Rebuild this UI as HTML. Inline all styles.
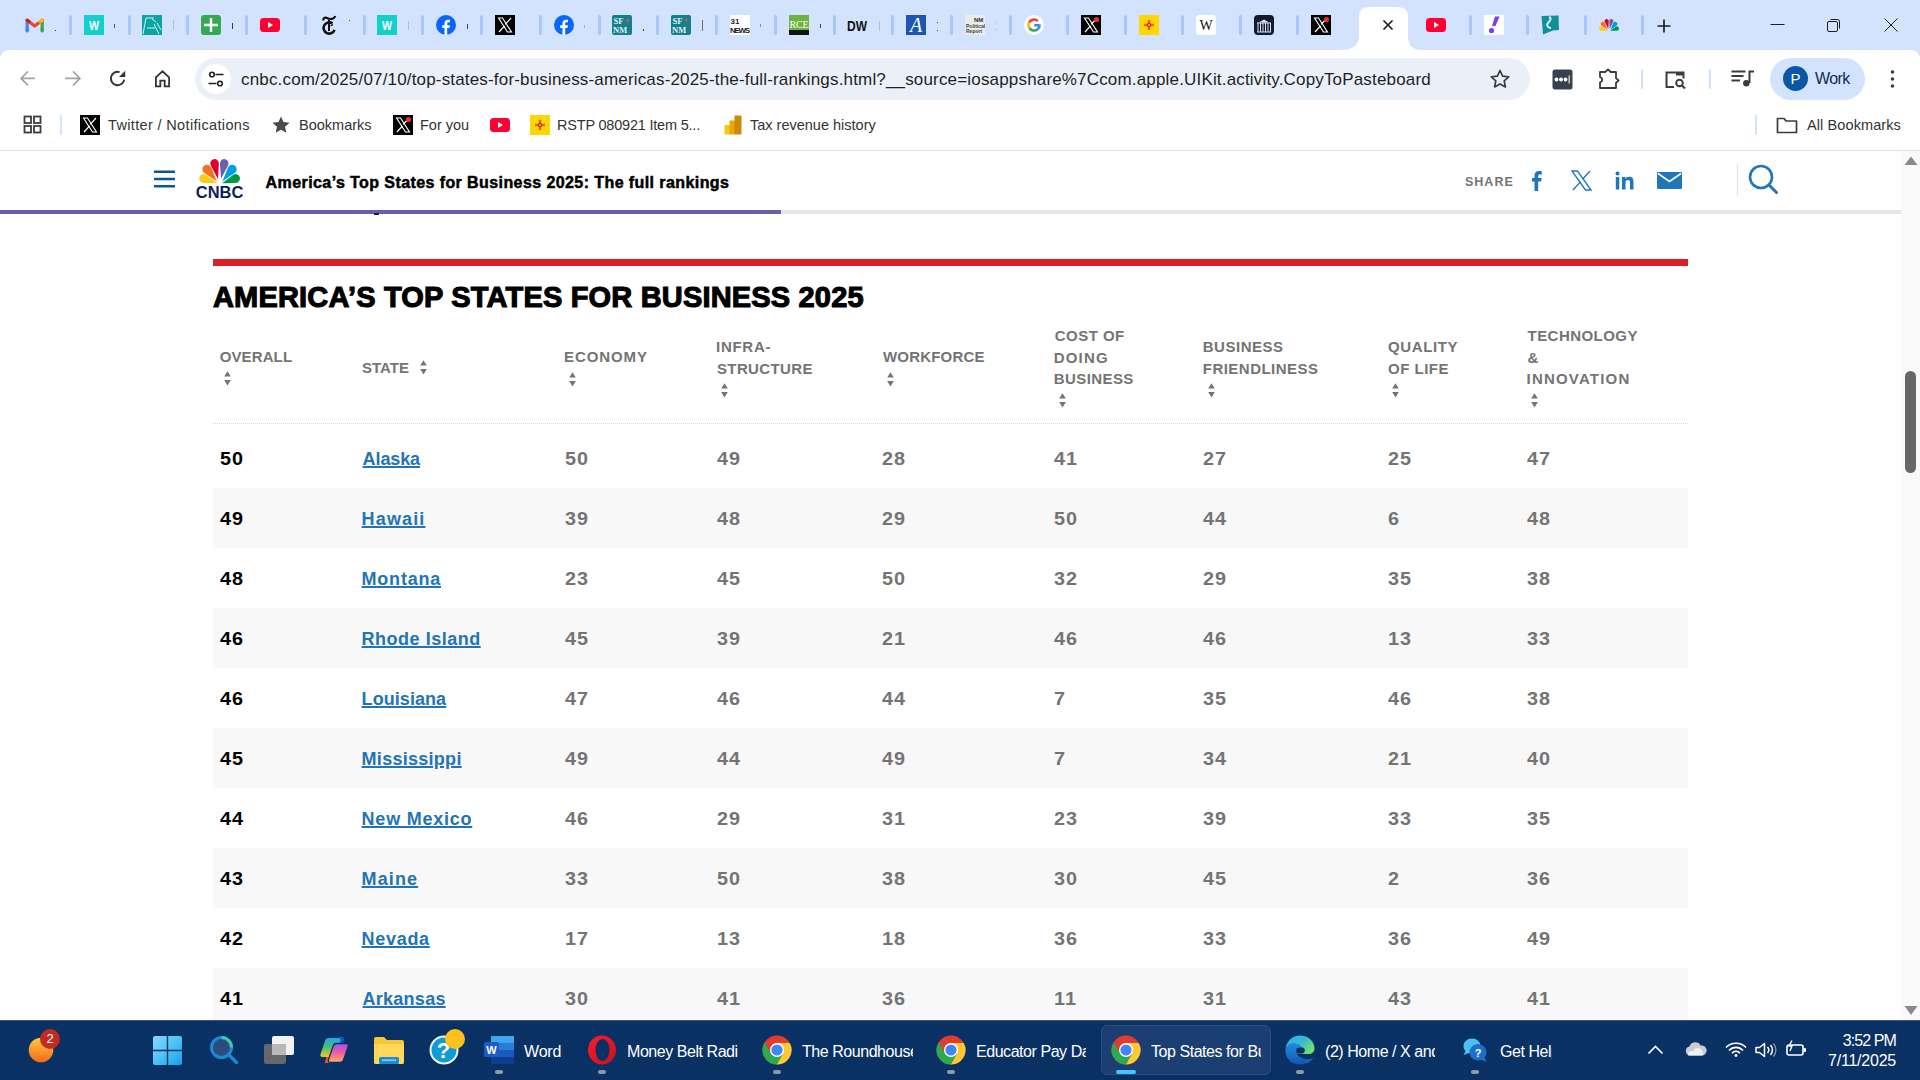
<!DOCTYPE html>
<html><head><meta charset="utf-8">
<style>
*{box-sizing:border-box;margin:0;padding:0}
html,body{width:1920px;height:1080px;overflow:hidden;background:#fff;font-family:"Liberation Sans",sans-serif}
.a{position:absolute}
#tabs{left:0;top:0;width:1920px;height:60px;background:#d3e3fd}
.sep{position:absolute;top:15px;width:3px;height:20px;background:#a8c7fa;border-radius:1.5px}
.fav{position:absolute;top:15px;width:20px;height:20px}
#toolbar{left:0;top:50px;width:1920px;height:50px;background:#fff;border-radius:9px 9px 0 0}
#omni{left:195px;top:58px;width:1335px;height:42px;background:#ebf0f8;border-radius:21px}
#bm{left:0;top:100px;width:1920px;height:51px;background:#fff;border-bottom:1px solid #e1e3e1}
.bmt{position:absolute;top:115px;font-size:14.5px;color:#333;line-height:20px;white-space:nowrap}
#page{left:0;top:151px;width:1901px;height:869px;background:#fff;overflow:hidden}
#scroll{left:1901px;top:151px;width:19px;height:869px;background:#f9f9f9}
#task{left:0;top:1020px;width:1920px;height:60px;background:#0a3164}
.hd{font-size:15px;line-height:22px;font-weight:bold;color:#747474;letter-spacing:1px;white-space:nowrap}
.rk,.st,.nm{font-size:18px;line-height:26px;font-weight:bold;white-space:nowrap}
.rk{color:#000;letter-spacing:1px;transform:scaleX(1.1);transform-origin:0 0}
.st{color:#2274b6;text-decoration:underline;text-underline-offset:1px;text-decoration-thickness:2px}
.nm{color:#747474;letter-spacing:1px;transform:scaleX(1.1);transform-origin:0 0}
.tt{top:20.5px;font-size:16px;line-height:22px;color:#fff;white-space:nowrap;letter-spacing:-0.45px}
.ind{top:50px;width:8px;height:4px;border-radius:2px;background:#8c99ad}
</style></head>
<body>
<div id="tabs" class="a">
<div class="fav" style="left:25px"><svg width="20" height="20" viewBox="0 0 20 20"><path d="M2.2 16V5.5" stroke="#4285f4" stroke-width="3.2" stroke-linecap="round"/><path d="M17.2 16V5.5" stroke="#34a853" stroke-width="3.2" stroke-linecap="round"/><path d="M2.2 5.2L9.7 11l7.5-5.8" fill="none" stroke="#ea4335" stroke-width="3.2" stroke-linejoin="round" stroke-linecap="round"/><path d="M15.2 6.7l2-1.5" stroke="#fbbc04" stroke-width="3.2" stroke-linecap="round"/><path d="M2.2 5.2l1.8 1.4" stroke="#c5221f" stroke-width="3.2" stroke-linecap="round"/><rect x="0.6" y="13" width="3.2" height="3" fill="#4285f4"/><rect x="15.6" y="13" width="3.2" height="3" fill="#34a853"/></svg></div>
<div class="fav" style="left:84px"><svg width="20" height="20" viewBox="0 0 20 20"><rect width="20" height="20" fill="#12d0cc"/><text x="10" y="15" font-family="Liberation Sans" font-weight="bold" font-size="13" fill="#fff" text-anchor="middle" textLength="10" lengthAdjust="spacingAndGlyphs">W</text></svg></div>
<div class="fav" style="left:142px"><svg width="20" height="20" viewBox="0 0 20 20"><rect width="20" height="20" fill="#0aa3a6"/><path d="M1 19l3-16h8M5 13h8M10 4l4 3M12 9l5 10M15 8l4 7" stroke="#d8f4f4" stroke-width="1" fill="none"/></svg></div>
<div class="fav" style="left:201px"><svg width="20" height="20" viewBox="0 0 20 20"><rect width="20" height="20" rx="3" fill="#34a853"/><path d="M10 3v14M3 10h14" stroke="#fff" stroke-width="2.4"/></svg></div>
<div class="fav" style="left:260px"><svg width="20" height="20" viewBox="0 0 20 20"><rect x="0" y="3" width="20" height="14" rx="3.5" fill="#ff0033"/><path d="M8 7v6l5-3z" fill="#fff"/></svg></div>
<div class="fav" style="left:319px"><svg width="20" height="20" viewBox="0 0 20 20"><path d="M4.2 5.5C4 3 6 2 8 3s4 1.5 6 0.5c1-.5 2-1.5 2.3-2.5" fill="none" stroke="#111" stroke-width="2.2"/><path d="M13.5 8.5A5.6 5.6 0 1 0 15.5 14.8" fill="none" stroke="#111" stroke-width="2.6"/><path d="M10 4.5V16" stroke="#111" stroke-width="2"/><path d="M11.5 11l2.5-1.5" stroke="#111" stroke-width="1.2"/></svg></div>
<div class="fav" style="left:377px"><svg width="20" height="20" viewBox="0 0 20 20"><rect width="20" height="20" fill="#12d0cc"/><text x="10" y="15" font-family="Liberation Sans" font-weight="bold" font-size="13" fill="#fff" text-anchor="middle" textLength="10" lengthAdjust="spacingAndGlyphs">W</text></svg></div>
<div class="fav" style="left:436px"><svg width="20" height="20" viewBox="0 0 20 20"><circle cx="10" cy="10" r="10" fill="#0866ff"/><path d="M11.2 20v-7h2.3l.4-2.7h-2.7V8.6c0-.8.3-1.4 1.4-1.4h1.4V4.8c-.3 0-1.1-.1-2-.1-2.1 0-3.5 1.3-3.5 3.6v2h-2.3V13h2.3v7z" fill="#fff"/></svg></div>
<div class="fav" style="left:495px"><svg width="20" height="20" viewBox="0 0 20 20"><rect width="20" height="20" fill="#000"/><path d="M3.5 3h4l9 14h-4z" fill="none" stroke="#fff" stroke-width="1.1"/><path d="M16 3l-5.8 6.4M4 17l5.6-6.2" stroke="#fff" stroke-width="1.2"/></svg></div>
<div class="fav" style="left:554px"><svg width="20" height="20" viewBox="0 0 20 20"><circle cx="10" cy="10" r="10" fill="#0866ff"/><path d="M11.2 20v-7h2.3l.4-2.7h-2.7V8.6c0-.8.3-1.4 1.4-1.4h1.4V4.8c-.3 0-1.1-.1-2-.1-2.1 0-3.5 1.3-3.5 3.6v2h-2.3V13h2.3v7z" fill="#fff"/></svg></div>
<div class="fav" style="left:612px"><svg width="20" height="20" viewBox="0 0 20 20"><rect width="20" height="20" rx="2" fill="#12808f"/><text x="1.5" y="8.5" font-family="Liberation Serif" font-weight="bold" font-size="8.5" fill="#e6f2f2">SF</text><text x="1" y="17.5" font-family="Liberation Serif" font-weight="bold" font-size="8.5" fill="#e6f2f2">NM</text><path d="M15.5 3v4.5M13 5.3h5" stroke="#d9534f" stroke-width="1"/></svg></div>
<div class="fav" style="left:671px"><svg width="20" height="20" viewBox="0 0 20 20"><rect width="20" height="20" rx="2" fill="#12808f"/><text x="1.5" y="8.5" font-family="Liberation Serif" font-weight="bold" font-size="8.5" fill="#e6f2f2">SF</text><text x="1" y="17.5" font-family="Liberation Serif" font-weight="bold" font-size="8.5" fill="#e6f2f2">NM</text><path d="M15.5 3v4.5M13 5.3h5" stroke="#d9534f" stroke-width="1"/></svg></div>
<div class="fav" style="left:730px"><svg width="20" height="20" viewBox="0 0 20 20"><rect width="20" height="20" fill="#fff"/><text x="0.5" y="9" font-family="Liberation Sans" font-weight="bold" font-size="8" fill="#222">31</text><text x="0" y="18" font-family="Liberation Sans" font-weight="bold" font-size="8" fill="#222" textLength="20">NEWS</text></svg></div>
<div class="fav" style="left:789px"><svg width="20" height="20" viewBox="0 0 20 20"><rect width="20" height="15" fill="#6cb33f"/><rect y="15" width="20" height="5" fill="#111"/><text x="10" y="13" font-family="Liberation Serif" font-size="10" fill="#fff" text-anchor="middle" textLength="19">RCE</text></svg></div>
<div class="fav" style="left:847px"><svg width="20" height="20" viewBox="0 0 20 20"><text x="10" y="16" font-family="Liberation Sans" font-weight="bold" font-size="14" fill="#111" text-anchor="middle" textLength="20" lengthAdjust="spacingAndGlyphs">DW</text></svg></div>
<div class="fav" style="left:906px"><svg width="20" height="20" viewBox="0 0 20 20"><rect width="20" height="20" fill="#1c56b0"/><text x="10" y="17" font-family="Liberation Serif" font-style="italic" font-size="20" fill="#fff" text-anchor="middle">A</text></svg></div>
<div class="fav" style="left:965px"><svg width="20" height="20" viewBox="0 0 20 20"><rect width="20" height="20" fill="#ececec"/><text x="9" y="7" font-family="Liberation Sans" font-weight="bold" font-size="6" fill="#333">NM</text><text x="1" y="13" font-family="Liberation Sans" font-weight="bold" font-size="5" fill="#444">Political</text><text x="1" y="18" font-family="Liberation Sans" font-weight="bold" font-size="5" fill="#444">Report</text></svg></div>
<div class="fav" style="left:1024px"><svg width="20" height="20" viewBox="0 0 20 20"><circle cx="10" cy="10" r="10" fill="#fff"/><path d="M15.5 10.2H10.2" stroke="#4285f4" stroke-width="2.6"/><path d="M15.6 9.5a5.6 5.6 0 0 1-1.9 4.7" stroke="#4285f4" stroke-width="2.6" fill="none"/><path d="M13.7 14.2A5.6 5.6 0 0 1 5.3 12.8" stroke="#34a853" stroke-width="2.6" fill="none"/><path d="M5.3 12.8a5.6 5.6 0 0 1 0-5.6" stroke="#fbbc05" stroke-width="2.6" fill="none"/><path d="M5.3 7.2A5.6 5.6 0 0 1 13.8 6" stroke="#ea4335" stroke-width="2.6" fill="none"/></svg></div>
<div class="fav" style="left:1081px"><svg width="20" height="20" viewBox="0 0 20 20"><rect width="20" height="20" fill="#000"/><path d="M3.5 3h4l9 14h-4z" fill="none" stroke="#fff" stroke-width="1.1"/><path d="M16 3l-5.8 6.4M4 17l5.6-6.2" stroke="#fff" stroke-width="1.2"/><circle cx="15.5" cy="4.5" r="2.6" fill="#ef2b2b"/></svg></div>
<div class="fav" style="left:1139px"><svg width="20" height="20" viewBox="0 0 20 20"><rect width="20" height="20" fill="#ffd700"/><circle cx="10" cy="10" r="2" fill="#c8102e"/><path d="M9.3 5v10M10.7 5v10M5 9.3h10M5 10.7h10" stroke="#c8102e" stroke-width="0.7"/><circle cx="10" cy="10" r="1" fill="#ffd700"/></svg></div>
<div class="fav" style="left:1196px"><svg width="20" height="20" viewBox="0 0 20 20"><rect width="20" height="20" rx="3" fill="#fff"/><text x="10" y="15" font-family="Liberation Serif" font-size="14" fill="#111" text-anchor="middle">W</text></svg></div>
<div class="fav" style="left:1254px"><svg width="20" height="20" viewBox="0 0 20 20"><rect width="20" height="20" rx="4" fill="#121a33"/><path d="M3 8h14M4 8v9M6.5 8v9M9 8v9M11.5 8v9M14 8v9M16.5 8v9M3 17h14" stroke="#dfe3ee" stroke-width="1"/><path d="M5 7.5l5-3 5 3z" fill="#dfe3ee"/></svg></div>
<div class="fav" style="left:1311px"><svg width="20" height="20" viewBox="0 0 20 20"><rect width="20" height="20" fill="#000"/><path d="M3.5 3h4l9 14h-4z" fill="none" stroke="#fff" stroke-width="1.1"/><path d="M16 3l-5.8 6.4M4 17l5.6-6.2" stroke="#fff" stroke-width="1.2"/><circle cx="15.5" cy="4.5" r="2.6" fill="#ef2b2b"/></svg></div>
<div class="fav" style="left:1426px"><svg width="20" height="20" viewBox="0 0 20 20"><rect x="0" y="3" width="20" height="14" rx="3.5" fill="#ff0033"/><path d="M8 7v6l5-3z" fill="#fff"/></svg></div>
<div class="fav" style="left:1484px"><svg width="20" height="20" viewBox="0 0 20 20"><rect width="20" height="20" fill="#fff"/><path d="M11 1.5h4.5l-4 9.5h-3.5z" fill="#7d3bf2"/><circle cx="7.5" cy="15.5" r="2.6" fill="#7d3bf2"/></svg></div>
<div class="fav" style="left:1541px"><svg width="20" height="20" viewBox="0 0 20 20"><path d="M0.5 1l17-0.5 0.5 14.5-6 0.5-10 4z" fill="#0e9197"/><path d="M8 2c3 1 1 4 -1 6s0 5 3 5" stroke="#d8efef" stroke-width="2" fill="none"/></svg></div>
<div class="fav" style="left:1599px"><svg width="20" height="20" viewBox="0 0 20 20"><g transform="translate(0,4) scale(0.488)"><path d="M18.50 24.20L4.51 23.90A4.4 4.4 0 1 1 7.19 15.95Z" fill="#fccc12"/><path d="M17.80 22.20L5.41 13.95A4.5 4.5 0 1 1 12.05 8.46Z" fill="#f37021"/><path d="M19.00 20.20L11.79 6.39A4.3 4.3 0 1 1 19.89 4.65Z" fill="#e4002b"/><path d="M22.00 19.80L20.91 4.71A4.3 4.3 0 1 1 29.01 6.39Z" fill="#6e5fab"/><path d="M23.50 22.20L29.03 8.51A4.5 4.5 0 1 1 35.72 13.93Z" fill="#009fe3"/><path d="M23.00 24.20L33.96 15.98A4.4 4.4 0 1 1 36.70 23.90Z" fill="#009a44"/></g></svg></div>
<div class="sep" style="left:69px"></div>
<div class="sep" style="left:128px"></div>
<div class="sep" style="left:186px"></div>
<div class="sep" style="left:245px"></div>
<div class="sep" style="left:304px"></div>
<div class="sep" style="left:363px"></div>
<div class="sep" style="left:421px"></div>
<div class="sep" style="left:480px"></div>
<div class="sep" style="left:539px"></div>
<div class="sep" style="left:598px"></div>
<div class="sep" style="left:656px"></div>
<div class="sep" style="left:715px"></div>
<div class="sep" style="left:774px"></div>
<div class="sep" style="left:833px"></div>
<div class="sep" style="left:891px"></div>
<div class="sep" style="left:950px"></div>
<div class="sep" style="left:1009px"></div>
<div class="sep" style="left:1066px"></div>
<div class="sep" style="left:1124px"></div>
<div class="sep" style="left:1181px"></div>
<div class="sep" style="left:1239px"></div>
<div class="sep" style="left:1296px"></div>
<div class="sep" style="left:1469px"></div>
<div class="sep" style="left:1526px"></div>
<div class="sep" style="left:1584px"></div>
<div class="sep" style="left:1641px"></div>
<div class="a" style="left:55px;top:29.5px;width:1.2px;height:1.3px;background:#333;opacity:0.9"></div>
<div class="a" style="left:114px;top:24px;width:1.2px;height:3.5px;background:#444;opacity:0.9"></div>
<div class="a" style="left:173px;top:20px;width:1px;height:10px;background:#777;opacity:0.35"></div>
<div class="a" style="left:232px;top:22.5px;width:1.3px;height:6px;background:#333;opacity:0.95"></div>
<div class="a" style="left:349px;top:19.5px;width:1.2px;height:1.3px;background:#333;opacity:0.9"></div>
<div class="a" style="left:408px;top:20.5px;width:1px;height:9.5px;background:#777;opacity:0.35"></div>
<div class="a" style="left:467px;top:23.7px;width:1.3px;height:5.7px;background:#333;opacity:0.9"></div>
<div class="a" style="left:584px;top:25px;width:1px;height:2.5px;background:#777;opacity:0.5"></div>
<div class="a" style="left:643px;top:28.5px;width:1.2px;height:2px;background:#333;opacity:0.9"></div>
<div class="a" style="left:702px;top:20px;width:1.2px;height:10.5px;background:#555;opacity:0.8"></div>
<div class="a" style="left:760px;top:24px;width:1px;height:3px;background:#555;opacity:0.6"></div>
<div class="a" style="left:819.5px;top:24px;width:1.2px;height:3.7px;background:#333;opacity:0.9"></div>
<div class="a" style="left:878.5px;top:20.5px;width:1px;height:10px;background:#777;opacity:0.35"></div>
<div class="a" style="left:937px;top:21.5px;width:1.2px;height:1.6px;background:#333;opacity:0.9"></div>
<div class="a" style="left:937px;top:29.5px;width:1.2px;height:1.8px;background:#333;opacity:0.9"></div>
<div class="a" style="left:995px;top:22px;width:1px;height:1.2px;background:#777;opacity:0.5"></div>
<div class="a" style="left:995px;top:28.5px;width:1px;height:1.2px;background:#777;opacity:0.5"></div>
</div>
<svg class="a" style="left:1340px;top:0" width="86" height="50" viewBox="0 0 86 50"><path d="M0 50 Q19 50 19 36 V17 Q19 7 29 7 H58 Q68 7 68 17 V36 Q68 50 82 50 Z" fill="#fff"/></svg>
<svg class="a" style="left:1382px;top:19px" width="12" height="12" viewBox="0 0 12 12"><path d="M1.5 1.5l9 9M10.5 1.5l-9 9" stroke="#1f1f1f" stroke-width="1.7"/></svg>
<svg class="a" style="left:1656px;top:18px" width="16" height="16" viewBox="0 0 16 16"><path d="M8 1.5v13M1.5 8h13" stroke="#1f1f1f" stroke-width="1.7"/></svg>
<svg class="a" style="left:1770px;top:23px" width="16" height="4" viewBox="0 0 16 4"><path d="M0.5 1.5h14" stroke="#1f1f1f" stroke-width="1"/></svg>
<svg class="a" style="left:1826px;top:17px" width="16" height="16" viewBox="0 0 16 16"><rect x="1.5" y="4.5" width="10" height="10" rx="1.5" fill="none" stroke="#1f1f1f" stroke-width="1"/><path d="M4.5 2.5h7a2 2 0 0 1 2 2v7" fill="none" stroke="#1f1f1f" stroke-width="1"/></svg>
<svg class="a" style="left:1883px;top:17px" width="16" height="16" viewBox="0 0 16 16"><path d="M1.5 1.5l13 13M14.5 1.5l-13 13" stroke="#1f1f1f" stroke-width="1"/></svg>

<div id="toolbar" class="a"></div>
<svg class="a" style="left:18px;top:68px" width="22" height="22" viewBox="0 0 22 22"><path d="M17 10.4H3.2M10 3.4L3 10.4l7 7" fill="none" stroke="#a3a3a3" stroke-width="1.6"/></svg>
<svg class="a" style="left:61px;top:68px" width="22" height="22" viewBox="0 0 22 22"><path d="M4 10.4h13.8M12 3.4l7 7-7 7" fill="none" stroke="#a3a3a3" stroke-width="1.6"/></svg>
<svg class="a" style="left:106px;top:68px" width="22" height="22" viewBox="0 0 22 22"><path d="M18.2 11.6A6.7 6.7 0 1 1 13.6 4.1" fill="none" stroke="#333" stroke-width="1.9"/><path d="M19.2 2.8V9H13z" fill="#333"/></svg>
<svg class="a" style="left:151px;top:68px" width="22" height="22" viewBox="0 0 22 22"><path d="M4.9 18.3V9.3L11.5 3.3l6.6 6V18.3h-4.4v-5.6h-4.4v5.6z" fill="none" stroke="#333" stroke-width="1.8" stroke-linejoin="miter"/></svg>
<div id="omni" class="a"></div>
<div class="a" style="left:201px;top:64px;width:30px;height:30px;border-radius:15px;background:#fff"></div>
<svg class="a" style="left:206px;top:69px" width="20" height="20" viewBox="0 0 20 20"><circle cx="6" cy="5.5" r="2.3" fill="none" stroke="#1f1f1f" stroke-width="1.6"/><path d="M9.5 5.5h8M2.5 14.5h8" stroke="#1f1f1f" stroke-width="1.6"/><circle cx="14" cy="14.5" r="2.3" fill="none" stroke="#1f1f1f" stroke-width="1.6"/></svg>
<div class="a" id="url" style="left:241px;top:69px;font-size:17px;letter-spacing:0.17px;line-height:22px;color:#1f1f1f;white-space:nowrap">cnbc.com/2025/07/10/top-states-for-business-americas-2025-the-full-rankings.html?__source=iosappshare%7Ccom.apple.UIKit.activity.CopyToPasteboard</div>
<svg class="a" style="left:1489px;top:68px" width="22" height="22" viewBox="0 0 22 22"><path d="M11 2.5l2.6 5.6 6.1.7-4.5 4.1 1.2 6-5.4-3-5.4 3 1.2-6-4.5-4.1 6.1-.7z" fill="none" stroke="#3c3c3c" stroke-width="1.7" stroke-linejoin="round"/></svg>
<svg class="a" style="left:1552px;top:69px" width="21" height="21" viewBox="0 0 21 21"><rect x="0.5" y="0.5" width="20" height="20" rx="2.5" fill="#36434f"/><circle cx="4.5" cy="10.5" r="1.9" fill="#fff"/><circle cx="9" cy="10.5" r="1.9" fill="#fff"/><circle cx="13.5" cy="10.5" r="1.9" fill="#fff"/><path d="M17.2 6.5v8" stroke="#cfd3d6" stroke-width="1.4"/></svg>
<svg class="a" style="left:1597px;top:67px" width="24" height="24" viewBox="0 0 24 24"><path d="M3 5h5.3l2.7-2.6 2.7 2.6H19v6.2l2.6 2.3-2.6 2.3V21H3v-5.6a2.7 2.7 0 0 0 0-5.3z" fill="none" stroke="#3c3c3c" stroke-width="1.8" stroke-linejoin="round"/></svg>
<div class="a" style="left:1640.5px;top:69px;width:2px;height:20px;background:#d0e0fc;border-radius:1px"></div>
<svg class="a" style="left:1664px;top:68px" width="24" height="24" viewBox="0 0 24 24"><path d="M10 19H2.5V4.5h17v6" fill="none" stroke="#3c3c3c" stroke-width="2"/><path d="M12 4.5h8v3h-8z" fill="#3c3c3c"/><circle cx="15.5" cy="15" r="3.3" fill="none" stroke="#3c3c3c" stroke-width="1.9"/><path d="M18 17.5l3 3" stroke="#3c3c3c" stroke-width="2"/></svg>
<div class="a" style="left:1708.5px;top:69px;width:2px;height:20px;background:#d0e0fc;border-radius:1px"></div>
<svg class="a" style="left:1730px;top:68px" width="24" height="22" viewBox="0 0 24 22"><path d="M1.5 3.5h14M1.5 8h12M1.5 12.5h8.5" stroke="#3c3c3c" stroke-width="1.9"/><path d="M19.5 15V3.5h4.5" fill="none" stroke="#3c3c3c" stroke-width="2"/><circle cx="16.3" cy="15.3" r="3.2" fill="#3c3c3c"/></svg>
<div class="a" style="left:1770px;top:58px;width:95px;height:42px;border-radius:21px;background:#d3e3fd"></div>
<div class="a" style="left:1783px;top:66px;width:25px;height:25px;border-radius:13px;background:#0b57a5;color:#fff;font-size:15px;line-height:25px;text-align:center">P</div>
<div class="a" id="work" style="left:1815px;top:68px;font-size:16px;line-height:22px;color:#0e2a5a;letter-spacing:-0.6px">Work</div>
<svg class="a" style="left:1882px;top:68px" width="20" height="22" viewBox="0 0 20 22"><circle cx="10.5" cy="4" r="1.8" fill="#3c3c3c"/><circle cx="10.5" cy="11" r="1.8" fill="#3c3c3c"/><circle cx="10.5" cy="18" r="1.8" fill="#3c3c3c"/></svg>
<div id="bm" class="a"></div>
<svg class="a" style="left:23px;top:115px" width="20" height="20" viewBox="0 0 20 20"><rect x="1.5" y="1.5" width="6.5" height="6.5" fill="none" stroke="#3c3c3c" stroke-width="1.8"/><rect x="11" y="1.5" width="6.5" height="6.5" fill="none" stroke="#3c3c3c" stroke-width="1.8"/><rect x="1.5" y="11" width="6.5" height="6.5" fill="none" stroke="#3c3c3c" stroke-width="1.8"/><rect x="11" y="11" width="6.5" height="6.5" fill="none" stroke="#3c3c3c" stroke-width="1.8"/></svg>
<div class="a" style="left:60px;top:115px;width:2px;height:20px;background:#d3e3fd;border-radius:1px"></div>
<div class="fav" style="left:80px;top:115px"><svg width="20" height="20" viewBox="0 0 20 20"><rect width="20" height="20" fill="#000"/><path d="M3.5 3h4l9 14h-4z" fill="none" stroke="#fff" stroke-width="1.1"/><path d="M16 3l-5.8 6.4M4 17l5.6-6.2" stroke="#fff" stroke-width="1.2"/></svg></div>
<div class="bmt" id="b1" style="left:108px;letter-spacing:0.35px">Twitter / Notifications</div>
<svg class="a" style="left:271px;top:115px" width="20" height="20" viewBox="0 0 20 20"><path d="M10 1.5l2.5 5.6 6.1.6-4.6 4.1 1.3 6-5.3-3.1-5.3 3.1 1.3-6-4.6-4.1 6.1-.6z" fill="#4a4a4a"/></svg>
<div class="bmt" id="b2" style="left:299px">Bookmarks</div>
<div class="fav" style="left:393px;top:115px"><svg width="20" height="20" viewBox="0 0 20 20"><rect width="20" height="20" fill="#000"/><path d="M3.5 3h4l9 14h-4z" fill="none" stroke="#fff" stroke-width="1.1"/><path d="M16 3l-5.8 6.4M4 17l5.6-6.2" stroke="#fff" stroke-width="1.2"/><circle cx="15.5" cy="4.5" r="2.6" fill="#ef2b2b"/></svg></div>
<div class="bmt" id="b3" style="left:420px">For you</div>
<div class="fav" style="left:490px;top:115px"><svg width="20" height="20" viewBox="0 0 20 20"><rect x="0" y="3" width="20" height="14" rx="3.5" fill="#ff0033"/><path d="M8 7v6l5-3z" fill="#fff"/></svg></div>
<div class="fav" style="left:530px;top:115px"><svg width="20" height="20" viewBox="0 0 20 20"><rect width="20" height="20" fill="#ffd700"/><circle cx="10" cy="10" r="2" fill="#c8102e"/><path d="M9.3 5v10M10.7 5v10M5 9.3h10M5 10.7h10" stroke="#c8102e" stroke-width="0.7"/><circle cx="10" cy="10" r="1" fill="#ffd700"/></svg></div>
<div class="bmt" id="b4" style="left:557px;letter-spacing:-0.2px">RSTP 080921 Item 5...</div>
<svg class="a" style="left:723px;top:115px" width="20" height="20" viewBox="0 0 20 20"><rect x="1.5" y="10" width="6" height="9.5" rx="1" fill="#f2c811"/><rect x="6.5" y="5.5" width="6" height="14" rx="1" fill="#e8a80c"/><rect x="11.5" y="0.5" width="7" height="19" rx="1" fill="#c98a08"/></svg>
<div class="bmt" id="b5" style="left:750px">Tax revenue history</div>
<div class="a" style="left:1755px;top:115px;width:2px;height:20px;background:#d3e3fd;border-radius:1px"></div>
<svg class="a" style="left:1776px;top:115px" width="22" height="20" viewBox="0 0 22 20"><path d="M1.5 3.5h6.5l2 2.5h10.5v11.5H1.5z" fill="none" stroke="#3c3c3c" stroke-width="1.7" stroke-linejoin="round"/></svg>
<div class="bmt" id="b6" style="left:1807px;letter-spacing:0.1px">All Bookmarks</div>
<div id="page" class="a">
<div class="a" style="left:0;top:59px;width:1901px;height:4px;background:#e6e6e6"></div>
<div class="a" style="left:0;top:59px;width:781px;height:4px;background:#6761aa"></div>
<svg class="a" style="left:154px;top:19px" width="21" height="18" viewBox="0 0 21 18"><path d="M0 1.8h21M0 9h21M0 16.2h21" stroke="#0a5897" stroke-width="2.4"/></svg>
<svg class="a" style="left:195px;top:3px" width="50" height="46" viewBox="0 0 50 46"><path d="M22.50 29.20L8.51 28.90A4.4 4.4 0 1 1 11.19 20.95Z" fill="#fccc12"/><path d="M21.80 27.20L9.41 18.95A4.5 4.5 0 1 1 16.05 13.46Z" fill="#f37021"/><path d="M23.00 25.20L15.79 11.39A4.3 4.3 0 1 1 23.89 9.65Z" fill="#e4002b"/><path d="M26.00 24.80L24.91 9.71A4.3 4.3 0 1 1 33.01 11.39Z" fill="#6e5fab"/><path d="M27.50 27.20L33.03 13.51A4.5 4.5 0 1 1 39.72 18.93Z" fill="#009fe3"/><path d="M27.00 29.20L37.96 20.98A4.4 4.4 0 1 1 40.70 28.90Z" fill="#009a44"/><text x="24.6" y="43.6" font-family="Liberation Sans" font-weight="bold" font-size="17" fill="#0c1f5c" text-anchor="middle" textLength="47.5" lengthAdjust="spacingAndGlyphs">CNBC</text></svg>
<div class="a" id="ttl" style="left:265.60px;top:22px;font-size:16px;line-height:20px;font-weight:bold;color:#000;white-space:nowrap;-webkit-text-stroke:0.5px #000;letter-spacing:0.414px">America’s Top States for Business 2025: The full rankings</div>
<div class="a" id="share" style="left:1465px;top:23px;font-size:12.5px;line-height:16px;font-weight:bold;color:#747474;letter-spacing:1px">SHARE</div>
<svg class="a" style="left:1530px;top:19px" width="16" height="21" viewBox="0 0 16 21"><path d="M4.5 21V11.5H2V8h2.5V5.5C4.5 2.5 6 1 9 1c1.2 0 2.2.1 2.8.2v3.2H10c-1.4 0-1.8.7-1.8 1.7V8h3.5l-.5 3.5h-3V21z" fill="#2076bb"/></svg>
<svg class="a" style="left:1571px;top:19px" width="21" height="21" viewBox="0 0 21 21"><path d="M1 1h5.5l13.5 19h-5.5z" fill="none" stroke="#2076bb" stroke-width="1.3"/><path d="M19 1l-7.5 8.3M2 20l7.6-8.4" stroke="#2076bb" stroke-width="1.4"/></svg>
<svg class="a" style="left:1615px;top:20px" width="20" height="19" viewBox="0 0 20 19"><circle cx="2.5" cy="2.5" r="2" fill="#2076bb"/><rect x="0.8" y="6" width="3.5" height="12.5" fill="#2076bb"/><path d="M7 6h3.3v1.8c.7-1.2 2-2.1 4-2.1 3 0 4.2 1.8 4.2 5.2v7.6h-3.5v-6.8c0-1.6-.4-2.8-2-2.8-1.7 0-2.5 1.2-2.5 3v6.6H7z" fill="#2076bb"/></svg>
<svg class="a" style="left:1657px;top:21px" width="25" height="17" viewBox="0 0 25 17"><rect x="0" y="0" width="25" height="17" rx="1" fill="#2076bb"/><path d="M1 1.5l11.5 8 11.5-8" fill="none" stroke="#fff" stroke-width="1.6"/></svg>
<div class="a" style="left:1737px;top:13px;width:1px;height:32px;background:#e3e3e3"></div>
<svg class="a" style="left:1748px;top:13px" width="32" height="32" viewBox="0 0 32 32"><circle cx="13" cy="13" r="11" fill="none" stroke="#2076bb" stroke-width="2.6"/><path d="M21 21l7.5 7.5" stroke="#2076bb" stroke-width="3" stroke-linecap="round"/></svg>
<div class="a" style="left:374px;top:62px;width:5px;height:2px;background:#222"></div>
<div class="a" style="left:213px;top:108px;width:1475px;height:7px;background:#dc1f26"></div>
<div class="a" id="big" style="left:213.00px;top:128px;font-size:29px;line-height:36px;font-weight:bold;color:#000;white-space:nowrap;-webkit-text-stroke:1.1px #000;letter-spacing:0.177px">AMERICA’S TOP STATES FOR BUSINESS 2025</div>
<div class="a hd" style="left:219.70px;top:195.3px;letter-spacing:0.116px">OVERALL</div>
<div class="a hd" style="left:362.00px;top:206.3px;letter-spacing:0.016px">STATE</div>
<div class="a hd" style="left:564.00px;top:195.3px;letter-spacing:0.917px">ECONOMY</div>
<div class="a hd" style="left:716.00px;top:184.6px;letter-spacing:0.734px">INFRA-</div>
<div class="a hd" style="left:717.00px;top:206.6px;letter-spacing:0.363px">STRUCTURE</div>
<div class="a hd" style="left:883.00px;top:195.3px;letter-spacing:0.177px">WORKFORCE</div>
<div class="a hd" style="left:1054.80px;top:173.6px;letter-spacing:0.45px">COST OF</div>
<div class="a hd" style="left:1053.80px;top:195.5px;letter-spacing:1.15px">DOING</div>
<div class="a hd" style="left:1053.80px;top:217.4px;letter-spacing:0.403px">BUSINESS</div>
<div class="a hd" style="left:1202.75px;top:184.6px;letter-spacing:0.51px">BUSINESS</div>
<div class="a hd" style="left:1202.75px;top:206.6px;letter-spacing:0.477px">FRIENDLINESS</div>
<div class="a hd" style="left:1388.00px;top:184.6px;letter-spacing:0.612px">QUALITY</div>
<div class="a hd" style="left:1388.00px;top:206.6px;letter-spacing:0.502px">OF LIFE</div>
<div class="a hd" style="left:1527.50px;top:173.6px;letter-spacing:0.463px">TECHNOLOGY</div>
<div class="a hd" style="left:1527.50px;top:195.5px;letter-spacing:0px">&amp;</div>
<div class="a hd" style="left:1526.50px;top:217.4px;letter-spacing:1.21px">INNOVATION</div>
<div class="a" style="left:223.75px;top:220px;line-height:0"><svg width="7" height="15" viewBox="0 0 7 15"><path d="M3.5 0.3L6.8 5.6H0.2z M0.2 8.9h6.6L3.5 14.4z" fill="#747474"/></svg></div>
<div class="a" style="left:419.75px;top:209px;line-height:0"><svg width="7" height="15" viewBox="0 0 7 15"><path d="M3.5 0.3L6.8 5.6H0.2z M0.2 8.9h6.6L3.5 14.4z" fill="#747474"/></svg></div>
<div class="a" style="left:568.75px;top:220.5px;line-height:0"><svg width="7" height="15" viewBox="0 0 7 15"><path d="M3.5 0.3L6.8 5.6H0.2z M0.2 8.9h6.6L3.5 14.4z" fill="#747474"/></svg></div>
<div class="a" style="left:720.75px;top:231.5px;line-height:0"><svg width="7" height="15" viewBox="0 0 7 15"><path d="M3.5 0.3L6.8 5.6H0.2z M0.2 8.9h6.6L3.5 14.4z" fill="#747474"/></svg></div>
<div class="a" style="left:886.75px;top:220.5px;line-height:0"><svg width="7" height="15" viewBox="0 0 7 15"><path d="M3.5 0.3L6.8 5.6H0.2z M0.2 8.9h6.6L3.5 14.4z" fill="#747474"/></svg></div>
<div class="a" style="left:1058.5px;top:242px;line-height:0"><svg width="7" height="15" viewBox="0 0 7 15"><path d="M3.5 0.3L6.8 5.6H0.2z M0.2 8.9h6.6L3.5 14.4z" fill="#747474"/></svg></div>
<div class="a" style="left:1207.75px;top:231.5px;line-height:0"><svg width="7" height="15" viewBox="0 0 7 15"><path d="M3.5 0.3L6.8 5.6H0.2z M0.2 8.9h6.6L3.5 14.4z" fill="#747474"/></svg></div>
<div class="a" style="left:1391.75px;top:231.5px;line-height:0"><svg width="7" height="15" viewBox="0 0 7 15"><path d="M3.5 0.3L6.8 5.6H0.2z M0.2 8.9h6.6L3.5 14.4z" fill="#747474"/></svg></div>
<div class="a" style="left:1531.25px;top:242px;line-height:0"><svg width="7" height="15" viewBox="0 0 7 15"><path d="M3.5 0.3L6.8 5.6H0.2z M0.2 8.9h6.6L3.5 14.4z" fill="#747474"/></svg></div>
<div class="a" style="left:213px;top:272px;width:1475px;height:0;border-top:1px dotted #d6d6d6"></div>
<div class="a rk" style="left:219.5px;top:295px">50</div>
<div class="a st" style="left:362.60px;top:295px;letter-spacing:-0.106px">Alaska</div>
<div class="a nm" style="left:565px;top:295px">50</div>
<div class="a nm" style="left:717px;top:295px">49</div>
<div class="a nm" style="left:882px;top:295px">28</div>
<div class="a nm" style="left:1054px;top:295px">41</div>
<div class="a nm" style="left:1203px;top:295px">27</div>
<div class="a nm" style="left:1388px;top:295px">25</div>
<div class="a nm" style="left:1527px;top:295px">47</div>
<div class="a" style="left:213px;top:337px;width:1475px;height:60px;background:#f8f8f8"></div>
<div class="a rk" style="left:219.5px;top:355px">49</div>
<div class="a st" style="left:361.60px;top:355px;letter-spacing:1.136px">Hawaii</div>
<div class="a nm" style="left:565px;top:355px">39</div>
<div class="a nm" style="left:717px;top:355px">48</div>
<div class="a nm" style="left:882px;top:355px">29</div>
<div class="a nm" style="left:1054px;top:355px">50</div>
<div class="a nm" style="left:1203px;top:355px">44</div>
<div class="a nm" style="left:1388px;top:355px">6</div>
<div class="a nm" style="left:1527px;top:355px">48</div>
<div class="a rk" style="left:219.5px;top:415px">48</div>
<div class="a st" style="left:361.60px;top:415px;letter-spacing:0.769px">Montana</div>
<div class="a nm" style="left:565px;top:415px">23</div>
<div class="a nm" style="left:717px;top:415px">45</div>
<div class="a nm" style="left:882px;top:415px">50</div>
<div class="a nm" style="left:1054px;top:415px">32</div>
<div class="a nm" style="left:1203px;top:415px">29</div>
<div class="a nm" style="left:1388px;top:415px">35</div>
<div class="a nm" style="left:1527px;top:415px">38</div>
<div class="a" style="left:213px;top:457px;width:1475px;height:60px;background:#f8f8f8"></div>
<div class="a rk" style="left:219.5px;top:475px">46</div>
<div class="a st" style="left:361.60px;top:475px;letter-spacing:0.508px">Rhode Island</div>
<div class="a nm" style="left:565px;top:475px">45</div>
<div class="a nm" style="left:717px;top:475px">39</div>
<div class="a nm" style="left:882px;top:475px">21</div>
<div class="a nm" style="left:1054px;top:475px">46</div>
<div class="a nm" style="left:1203px;top:475px">46</div>
<div class="a nm" style="left:1388px;top:475px">13</div>
<div class="a nm" style="left:1527px;top:475px">33</div>
<div class="a rk" style="left:219.5px;top:535px">46</div>
<div class="a st" style="left:361.60px;top:535px;letter-spacing:0.062px">Louisiana</div>
<div class="a nm" style="left:565px;top:535px">47</div>
<div class="a nm" style="left:717px;top:535px">46</div>
<div class="a nm" style="left:882px;top:535px">44</div>
<div class="a nm" style="left:1054px;top:535px">7</div>
<div class="a nm" style="left:1203px;top:535px">35</div>
<div class="a nm" style="left:1388px;top:535px">46</div>
<div class="a nm" style="left:1527px;top:535px">38</div>
<div class="a" style="left:213px;top:577px;width:1475px;height:60px;background:#f8f8f8"></div>
<div class="a rk" style="left:219.5px;top:595px">45</div>
<div class="a st" style="left:361.60px;top:595px;letter-spacing:0.277px">Mississippi</div>
<div class="a nm" style="left:565px;top:595px">49</div>
<div class="a nm" style="left:717px;top:595px">44</div>
<div class="a nm" style="left:882px;top:595px">49</div>
<div class="a nm" style="left:1054px;top:595px">7</div>
<div class="a nm" style="left:1203px;top:595px">34</div>
<div class="a nm" style="left:1388px;top:595px">21</div>
<div class="a nm" style="left:1527px;top:595px">40</div>
<div class="a rk" style="left:219.5px;top:655px">44</div>
<div class="a st" style="left:361.60px;top:655px;letter-spacing:0.762px">New Mexico</div>
<div class="a nm" style="left:565px;top:655px">46</div>
<div class="a nm" style="left:717px;top:655px">29</div>
<div class="a nm" style="left:882px;top:655px">31</div>
<div class="a nm" style="left:1054px;top:655px">23</div>
<div class="a nm" style="left:1203px;top:655px">39</div>
<div class="a nm" style="left:1388px;top:655px">33</div>
<div class="a nm" style="left:1527px;top:655px">35</div>
<div class="a" style="left:213px;top:697px;width:1475px;height:60px;background:#f8f8f8"></div>
<div class="a rk" style="left:219.5px;top:715px">43</div>
<div class="a st" style="left:361.60px;top:715px;letter-spacing:1.1px">Maine</div>
<div class="a nm" style="left:565px;top:715px">33</div>
<div class="a nm" style="left:717px;top:715px">50</div>
<div class="a nm" style="left:882px;top:715px">38</div>
<div class="a nm" style="left:1054px;top:715px">30</div>
<div class="a nm" style="left:1203px;top:715px">45</div>
<div class="a nm" style="left:1388px;top:715px">2</div>
<div class="a nm" style="left:1527px;top:715px">36</div>
<div class="a rk" style="left:219.5px;top:775px">42</div>
<div class="a st" style="left:361.60px;top:775px;letter-spacing:0.695px">Nevada</div>
<div class="a nm" style="left:565px;top:775px">17</div>
<div class="a nm" style="left:717px;top:775px">13</div>
<div class="a nm" style="left:882px;top:775px">18</div>
<div class="a nm" style="left:1054px;top:775px">36</div>
<div class="a nm" style="left:1203px;top:775px">33</div>
<div class="a nm" style="left:1388px;top:775px">36</div>
<div class="a nm" style="left:1527px;top:775px">49</div>
<div class="a" style="left:213px;top:817px;width:1475px;height:60px;background:#f8f8f8"></div>
<div class="a rk" style="left:219.5px;top:835px">41</div>
<div class="a st" style="left:362.60px;top:835px;letter-spacing:0.251px">Arkansas</div>
<div class="a nm" style="left:565px;top:835px">30</div>
<div class="a nm" style="left:717px;top:835px">41</div>
<div class="a nm" style="left:882px;top:835px">36</div>
<div class="a nm" style="left:1054px;top:835px">11</div>
<div class="a nm" style="left:1203px;top:835px">31</div>
<div class="a nm" style="left:1388px;top:835px">43</div>
<div class="a nm" style="left:1527px;top:835px">41</div>
</div>
<div id="scroll" class="a"></div>
<svg class="a" style="left:1903px;top:155px" width="16" height="11" viewBox="0 0 16 11"><path d="M1.5 10L8 1.5 14.5 10z" fill="#8a8a8a"/></svg>
<div class="a" style="left:1905px;top:371px;width:11px;height:102px;border-radius:6px;background:#676767"></div>
<svg class="a" style="left:1903px;top:1004.5px" width="16" height="11" viewBox="0 0 16 11"><path d="M1.5 1h13L8 10z" fill="#8a8a8a"/></svg>
<div id="task" class="a">
<div class="a" style="left:0;top:0;width:1920px;height:1px;background:#41557a"></div>
<svg class="a" style="left:28px;top:17px" width="26" height="26" viewBox="0 0 26 26"><defs><linearGradient id="wg" x1="0" y1="0" x2="0" y2="1"><stop offset="0" stop-color="#ffc83d"/><stop offset="1" stop-color="#f36a1d"/></linearGradient></defs><circle cx="13" cy="13" r="12.3" fill="url(#wg)"/></svg>
<div class="a" style="left:40px;top:9px;width:20px;height:20px;border-radius:10px;background:#c42b1c;color:#fff;font-size:13px;line-height:20px;text-align:center">2</div>
<svg class="a" style="left:153px;top:16px" width="29" height="29" viewBox="0 0 29 29"><defs><linearGradient id="sg" gradientUnits="userSpaceOnUse" x1="0" y1="0" x2="29" y2="29"><stop offset="0" stop-color="#8ed8fb"/><stop offset="0.5" stop-color="#4cc3f7"/><stop offset="1" stop-color="#1a9cf0"/></linearGradient></defs><path d="M2 0H13.8V13.8H0V2A2 2 0 0 1 2 0z M15.2 0H27A2 2 0 0 1 29 2V13.8H15.2z M0 15.2H13.8V29H2A2 2 0 0 1 0 27z M15.2 15.2H29V27A2 2 0 0 1 27 29H15.2z" fill="url(#sg)"/></svg>
<svg class="a" style="left:209px;top:15px" width="30" height="30" viewBox="0 0 30 30"><circle cx="12.5" cy="12.5" r="10" fill="#2b4d7d" stroke="#1e88d8" stroke-width="3"/><path d="M12.5 2.5a10 10 0 0 1 10 10" fill="none" stroke="#3fc9a5" stroke-width="3"/><path d="M20 20l7.5 7.5" stroke="#1e88d8" stroke-width="3.2" stroke-linecap="round"/></svg>
<svg class="a" style="left:264px;top:16px" width="31" height="29" viewBox="0 0 31 29"><rect x="8" y="0" width="22" height="19" rx="2" fill="#f2f2f2"/><rect x="0" y="8" width="22" height="20" rx="2" fill="#6b6b6b" opacity="0.95"/><rect x="8" y="8" width="14" height="11" fill="#b8b8b8"/></svg>
<svg class="a" style="left:320px;top:17px" width="29" height="26" viewBox="0 0 29 26"><defs><linearGradient id="cg" x1="0" y1="0" x2="0" y2="1"><stop offset="0" stop-color="#1fa6f5"/><stop offset="0.5" stop-color="#4fc06a"/><stop offset="1" stop-color="#f9c52b"/></linearGradient><linearGradient id="cg2" x1="0" y1="0" x2="0" y2="1"><stop offset="0" stop-color="#a04ee8"/><stop offset="0.5" stop-color="#ee5fa0"/><stop offset="1" stop-color="#fdb15a"/></linearGradient></defs><path d="M21 2.5L16 17" stroke="#1a4fd6" stroke-width="6" stroke-linecap="round"/><path d="M8 25L13 10" stroke="#e8532e" stroke-width="6" stroke-linecap="round"/><path d="M8.5 1h9.5c2 0 3 1.3 2.4 3L15.5 17.5c-.6 1.8-1.8 2.5-3.5 2.5H2.5C.8 20 0 18.8.5 17.2L5 4c.6-2 1.8-3 3.5-3z" fill="url(#cg)"/><path d="M16 6.5h10c1.8 0 2.8 1.2 2.2 3L23.5 23c-.6 1.8-1.8 2.5-3.5 2.5H10.5c-1.8 0-2.5-1.2-2-3L13 9.5c.6-2 1.3-3 3-3z" fill="url(#cg2)" stroke="#0a3164" stroke-width="1.3"/></svg>
<svg class="a" style="left:374px;top:17px" width="30" height="27" viewBox="0 0 30 27"><path d="M0 2a2 2 0 0 1 2-2h8l3 3h15a2 2 0 0 1 2 2v20a2 2 0 0 1-2 2H2a2 2 0 0 1-2-2z" fill="#f7c531"/><path d="M0 7h30v18a2 2 0 0 1-2 2H2a2 2 0 0 1-2-2z" fill="#ffd85a"/><rect x="5" y="20" width="20" height="7" rx="1.5" fill="#1b8ad8"/><rect x="8" y="22.5" width="14" height="1.5" fill="#8fd0ff"/></svg>
<svg class="a" style="left:429px;top:15px" width="30" height="30" viewBox="0 0 30 30"><circle cx="15" cy="15" r="13.5" fill="#0f9ad8" stroke="#f2f8ff" stroke-width="2"/><text x="14.5" y="23" font-family="Liberation Sans" font-weight="bold" font-size="22" fill="#fff" text-anchor="middle">?</text></svg>
<div class="a" style="left:445px;top:9px;width:20px;height:20px;border-radius:10px;background:#fcc21b"></div>
<svg class="a" style="left:484px;top:16px" width="30" height="28" viewBox="0 0 30 28"><rect x="7" y="0" width="23" height="7" fill="#41a5ee"/><rect x="7" y="7" width="23" height="7" fill="#2b7cd3"/><rect x="7" y="14" width="23" height="7" fill="#185abd"/><rect x="7" y="21" width="23" height="7" fill="#103f91"/><rect x="0" y="6" width="15" height="15" rx="1.5" fill="#1a5dc4"/><text x="7.5" y="18" font-family="Liberation Sans" font-weight="bold" font-size="11" fill="#fff" text-anchor="middle">W</text></svg>
<div class="a tt" style="left:524px;letter-spacing:-0.18px">Word</div>
<div class="a ind" style="left:495px"></div>
<svg class="a" style="left:587px;top:15px" width="30" height="30" viewBox="0 0 30 30"><defs><linearGradient id="og" x1="0" y1="0" x2="1" y2="1"><stop offset="0" stop-color="#ff1b2d"/><stop offset="1" stop-color="#c4101e"/></linearGradient></defs><ellipse cx="15" cy="15" rx="14" ry="14.5" fill="url(#og)"/><ellipse cx="15.5" cy="15" rx="7" ry="11" fill="#0a3164"/></svg>
<div class="a tt" style="left:627px">Money Belt Radi</div>
<div class="a ind" style="left:598px"></div>
<div class="a" style="left:762px;top:15px;line-height:0"><svg width="30" height="30" viewBox="0 0 30 30"><circle cx="15" cy="15" r="14.5" fill="#e33b2e"/><path d="M15.00 8.00L27.70 8.00A14.5 14.5 0 0 1 14.71 29.50L21.06 18.50L15 15Z" fill="#fcc934"/><path d="M21.06 18.50L14.71 29.50A14.5 14.5 0 0 1 2.59 7.50L8.94 18.50L15 15Z" fill="#2da94f"/><circle cx="15" cy="15" r="7" fill="#fff"/><circle cx="15" cy="15" r="5.6" fill="#4285f4"/></svg></div>
<div class="a tt" style="left:802px;width:111px;overflow:hidden">The Roundhouse</div>
<div class="a ind" style="left:773px"></div>
<div class="a" style="left:936px;top:15px;line-height:0"><svg width="30" height="30" viewBox="0 0 30 30"><circle cx="15" cy="15" r="14.5" fill="#e33b2e"/><path d="M15.00 8.00L27.70 8.00A14.5 14.5 0 0 1 14.71 29.50L21.06 18.50L15 15Z" fill="#fcc934"/><path d="M21.06 18.50L14.71 29.50A14.5 14.5 0 0 1 2.59 7.50L8.94 18.50L15 15Z" fill="#2da94f"/><circle cx="15" cy="15" r="7" fill="#fff"/><circle cx="15" cy="15" r="5.6" fill="#4285f4"/></svg></div>
<div class="a tt" style="left:976px;width:110px;overflow:hidden">Educator Pay Data</div>
<div class="a ind" style="left:947px"></div>
<div class="a" style="left:1101px;top:5px;width:170px;height:50px;border-radius:6px;background:#1c3f73;border:1px solid #2e4d7d"></div>
<div class="a" style="left:1111px;top:15px;line-height:0"><svg width="30" height="30" viewBox="0 0 30 30"><circle cx="15" cy="15" r="14.5" fill="#e33b2e"/><path d="M15.00 8.00L27.70 8.00A14.5 14.5 0 0 1 14.71 29.50L21.06 18.50L15 15Z" fill="#fcc934"/><path d="M21.06 18.50L14.71 29.50A14.5 14.5 0 0 1 2.59 7.50L8.94 18.50L15 15Z" fill="#2da94f"/><circle cx="15" cy="15" r="7" fill="#fff"/><circle cx="15" cy="15" r="5.6" fill="#4285f4"/></svg></div>
<div class="a tt" style="left:1151px;width:110px;overflow:hidden">Top States for Business</div>
<div class="a" style="left:1116px;top:50px;width:20px;height:4px;border-radius:2px;background:#4cc2ff"></div>
<svg class="a" style="left:1285px;top:15px" width="30" height="30" viewBox="0 0 30 30"><defs><linearGradient id="eg" x1="0" y1="0" x2="1" y2="0.6"><stop offset="0" stop-color="#2bb3f0"/><stop offset="0.55" stop-color="#36b6d8"/><stop offset="1" stop-color="#6fe06a"/></linearGradient><linearGradient id="eg2" x1="0" y1="0" x2="0" y2="1"><stop offset="0" stop-color="#1f8ee0"/><stop offset="1" stop-color="#1556b0"/></linearGradient></defs><path d="M15 .5C23.5.5 29.5 6.5 29.5 13.5c0 3.5-2.5 5.5-6 5.5h-8c-3 0-4.5-1.5-4.5-3.5 0-2.5 2.5-4 5-4 0 0-3-3-8-3C4.5 8.5.5 12 .5 16 .5 7 6.5.5 15 .5z" fill="url(#eg)"/><path d="M.5 16c0-4 4-7.5 8-7.5 3.5 0 6 1.5 7.5 3-2.5 0-5 1.5-5 4 0 5 6 9.5 13.5 8.5 1.5-.2 3-.8 4-1.5C25.5 27.5 20.5 29.5 15 29.5 6.5 29.5.5 23.5.5 16z" fill="url(#eg2)"/><ellipse cx="15.5" cy="15.5" rx="4.3" ry="3.3" fill="#0a3164"/></svg>
<div class="a tt" style="left:1325px;width:110px;overflow:hidden">(2) Home / X and</div>
<div class="a ind" style="left:1296px"></div>
<svg class="a" style="left:1463px;top:18px" width="25" height="25" viewBox="0 0 25 25"><path d="M9 .5c4.7 0 8.5 3.3 8.5 7.5S13.7 15.5 9 15.5c-1 0-2-.1-3-.4L.5 17l2-3.8C1.2 11.8.5 10 .5 8 .5 3.8 4.3.5 9 .5z" fill="#4fc0f3"/><path d="M15 6c4.7 0 8.5 3.7 8.5 8.3 0 2-.7 3.8-1.9 5.2l1.9 4.5-5.2-2.2c-1 .4-2.1.6-3.3.6-4.7 0-8.5-3.7-8.5-8.1S10.3 6 15 6z" fill="#1b70c8"/><text x="15" y="19" font-family="Liberation Sans" font-weight="bold" font-size="11" fill="#fff" text-anchor="middle">?</text></svg>
<div class="a tt" style="left:1500px;width:52px;overflow:hidden">Get Help</div>
<div class="a ind" style="left:1471px"></div>
<svg class="a" style="left:1647px;top:24px" width="17" height="11" viewBox="0 0 17 11"><path d="M1.5 9.5L8.5 2.5l7 7" fill="none" stroke="#fff" stroke-width="1.6"/></svg>
<svg class="a" style="left:1685px;top:22px" width="22" height="14" viewBox="0 0 22 14"><path d="M5 13.5A4.5 4.5 0 0 1 4.5 4.6 6 6 0 0 1 15.6 3.5 5 5 0 0 1 17.5 13.5z" fill="#c9ccd3"/><path d="M3 13.5A3.5 3.5 0 0 1 8 9.5a5 5 0 0 1 9.5 0 3 3 0 0 1 0 4z" fill="#eef0f3"/></svg>
<svg class="a" style="left:1725px;top:22px" width="22" height="15" viewBox="0 0 22 15"><path d="M1 5.5a14 14 0 0 1 20 0M4 8.5a9.5 9.5 0 0 1 14 0M7 11.3a5 5 0 0 1 8 0" fill="none" stroke="#fff" stroke-width="1.6"/><circle cx="11" cy="13.5" r="1.4" fill="#fff"/></svg>
<svg class="a" style="left:1755px;top:22px" width="22" height="16" viewBox="0 0 22 16"><path d="M1 5.5h3.5L9.5 1.5v13L4.5 10.5H1z" fill="none" stroke="#fff" stroke-width="1.5" stroke-linejoin="round"/><path d="M12.5 5a4.5 4.5 0 0 1 0 6M15.5 3a7.5 7.5 0 0 1 0 10" fill="none" stroke="#fff" stroke-width="1.5"/><path d="M18.5 1.5a10 10 0 0 1 0 13" fill="none" stroke="#8a96aa" stroke-width="1.3"/></svg>
<svg class="a" style="left:1786px;top:20px" width="21" height="17" viewBox="0 0 21 17"><rect x="1" y="5" width="16" height="10" rx="2" fill="none" stroke="#fff" stroke-width="1.6"/><rect x="17.5" y="8" width="2.5" height="4" rx="1" fill="#fff"/><path d="M6 0.5L3 6h3l-2 5" fill="none" stroke="#fff" stroke-width="1.4"/></svg>
<div class="a" style="left:1790px;top:11px;width:106px;font-size:16px;line-height:20px;color:#fff;text-align:right;white-space:nowrap;letter-spacing:-0.9px">3:52 PM</div>
<div class="a" style="left:1790px;top:31px;width:106px;font-size:16px;line-height:20px;color:#fff;text-align:right;white-space:nowrap;letter-spacing:-0.22px">7/11/2025</div>
</div>
</body></html>
